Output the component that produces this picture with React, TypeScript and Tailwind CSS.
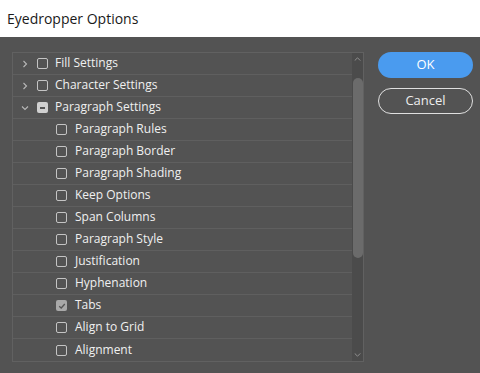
import React from "react";

type Row = { label: string; level: 0 | 1; state: "off" | "on" | "mixed"; expand?: "open" | "closed" };

const rows: Row[] = [
  { label: "Fill Settings", level: 0, state: "off", expand: "closed" },
  { label: "Character Settings", level: 0, state: "off", expand: "closed" },
  { label: "Paragraph Settings", level: 0, state: "mixed", expand: "open" },
  { label: "Paragraph Rules", level: 1, state: "off" },
  { label: "Paragraph Border", level: 1, state: "off" },
  { label: "Paragraph Shading", level: 1, state: "off" },
  { label: "Keep Options", level: 1, state: "off" },
  { label: "Span Columns", level: 1, state: "off" },
  { label: "Paragraph Style", level: 1, state: "off" },
  { label: "Justification", level: 1, state: "off" },
  { label: "Hyphenation", level: 1, state: "off" },
  { label: "Tabs", level: 1, state: "on" },
  { label: "Align to Grid", level: 1, state: "off" },
  { label: "Alignment", level: 1, state: "off" },
];

function Chevron({ open }: { open: boolean }) {
  return (
    <svg viewBox="0 0 8 8" className="size-2 text-[#b8b8b8]" fill="none" stroke="currentColor" strokeWidth="1.1">
      {open ? <path d="M1 2.5 4 5.5 7 2.5" /> : <path d="M2.5 1 5.5 4 2.5 7" />}
    </svg>
  );
}

function Box({ state }: { state: Row["state"] }) {
  if (state === "mixed") {
    return (
      <span className="flex size-[11px] shrink-0 items-center justify-center rounded-[2px] bg-[#d0d0d0]">
        <span className="h-[2px] w-[5px] bg-[#555]" />
      </span>
    );
  }
  if (state === "on") {
    return (
      <span className="flex size-[11px] shrink-0 items-center justify-center rounded-[2px] bg-[#a9a9a9]">
        <svg viewBox="0 0 10 10" className="size-[8px]" fill="none" stroke="#555" strokeWidth="1.6">
          <path d="M1.5 5.2 4 7.5 8.5 2.5" />
        </svg>
      </span>
    );
  }
  return <span className="block size-[11px] shrink-0 rounded-[2px] border border-[#c4c4c4]" />;
}

export default function App() {
  return (
    <div className="h-[373px] w-[480px] overflow-hidden bg-[#535353] font-['Open_Sans','Noto_Sans',sans-serif] text-[#f0f0f0]">
      <div className="flex h-[37px] items-center bg-white pl-[7px] text-[14px] text-[#1a1a1a]">
        Eyedropper Options
      </div>
      <div className="flex pl-[12px] pt-[15px]">
        <div className="flex w-[352px] border border-[#616161]">
          <div className="flex-1">
            {rows.map((r) => (
              <div
                key={r.label}
                className="flex h-[22px] items-center border-b border-[#5f5f5f] text-[12px] last:border-b-0"
              >
                {r.level === 0 ? (
                  <>
                    <span className="ml-[8px] flex w-[16px]">
                      <Chevron open={r.expand === "open"} />
                    </span>
                    <Box state={r.state} />
                    <span className="ml-[7px] -mt-[1px]">{r.label}</span>
                  </>
                ) : (
                  <>
                    <span className="ml-[43px] flex"><Box state={r.state} /></span>
                    <span className="ml-[8px] -mt-[1px]">{r.label}</span>
                  </>
                )}
              </div>
            ))}
          </div>
          <div className="flex w-[11px] flex-col items-center bg-[#4b4b4b] py-[4px]">
            <svg viewBox="0 0 8 5" className="h-[4px] w-[7px] text-[#9a9a9a]" fill="none" stroke="currentColor" strokeWidth="1.1">
              <path d="M0.5 4.5 4 1 7.5 4.5" />
            </svg>
            <div className="mt-[17px] h-[180px] w-[10px] rounded-full bg-[#6b6b6b]" />
            <div className="flex-1" />
            <svg viewBox="0 0 8 5" className="h-[4px] w-[7px] text-[#9a9a9a]" fill="none" stroke="currentColor" strokeWidth="1.1">
              <path d="M0.5 0.5 4 4 7.5 0.5" />
            </svg>
          </div>
        </div>
        <div className="ml-[14px] flex flex-col gap-[10px]">
          <button className="h-[26px] w-[95px] rounded-full bg-[#4a9bef] text-[13px] text-white">OK</button>
          <button className="h-[26px] w-[95px] rounded-full border border-[#e0e0e0] text-[13px] text-[#eeeeee]">Cancel</button>
        </div>
      </div>
    </div>
  );
}
